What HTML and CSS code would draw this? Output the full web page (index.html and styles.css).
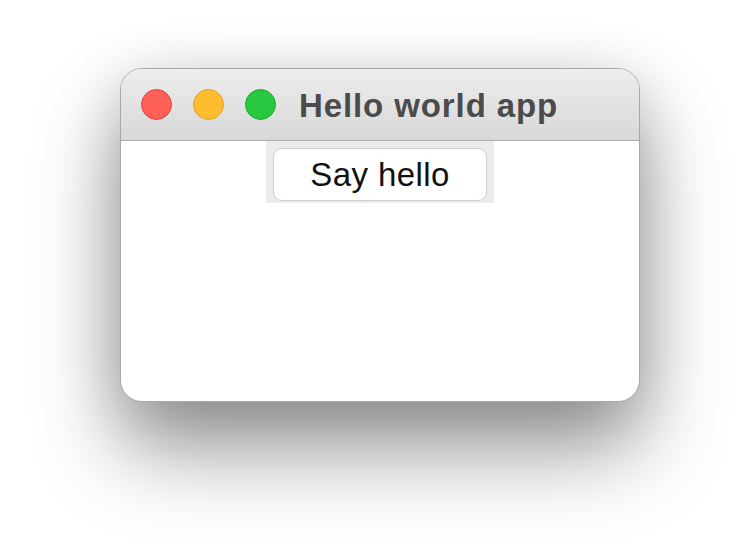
FILE: index.html
```html
<!DOCTYPE html>
<html lang="en">
<head>
  <meta charset="UTF-8">
  <meta name="viewport" content="width=device-width, initial-scale=1.0">
  <title>Hello world app</title>
  <link rel="stylesheet" href="styles.css">
</head>
<body>
  <div class="window">
    <div class="titlebar">
      <div class="lights">
        <span class="light close"></span>
        <span class="light minimize"></span>
        <span class="light zoom"></span>
      </div>
      <h1 class="title">Hello world app</h1>
    </div>

    <div class="content">
      <div class="button-frame">
        <button class="hello-btn">Say hello</button>
      </div>
    </div>
  </div>
</body>
</html>
```

FILE: styles.css
```css
* { box-sizing: border-box; margin: 0; padding: 0; }

body {
  font-family: 'Liberation Sans', Arial, sans-serif;
  background: #fff;
  padding: 68px 0 0 120px;
  min-height: 100vh;
}

.window {
  width: 520px;
  height: 334px;
  background: #fff;
  border: 1px solid #a9a9a9;
  border-radius: 22px;
  overflow: hidden;
  display: flex;
  flex-direction: column;
  box-shadow: 0 48px 85px rgba(0, 0, 0, 0.4), 0 10px 60px rgba(0, 0, 0, 0.15);
}

.titlebar {
  height: 72px;
  background: linear-gradient(#ededed, #d8d8d8);
  border-bottom: 1px solid #aeaeae;
  display: flex;
  align-items: center;
  padding-left: 20px;
  flex-shrink: 0;
}

.lights {
  display: flex;
  gap: 21px;
}

.light {
  width: 31px;
  height: 31px;
  border-radius: 50%;
  display: block;
}

.close { background: #fe5f57; border: 1px solid #e0443e; }
.minimize { background: #febc2e; border: 1px solid #dea123; }
.zoom { background: #28c840; border: 1px solid #1aab29; }

.title {
  margin-left: 23px;
  font-size: 33px;
  font-weight: bold;
  letter-spacing: 0.9px;
  color: #4b4b4b;
  margin-top: 2px;
}

.content {
  flex: 1;
  display: flex;
  justify-content: center;
  align-items: flex-start;
}

.button-frame {
  background: #ececec;
  padding: 7px 7px 2px 7px;
}

.hello-btn {
  width: 214px;
  height: 53px;
  background: #fff;
  border: 1px solid #cfcfcf;
  border-radius: 9px;
  font-family: 'Liberation Sans', Arial, sans-serif;
  font-size: 33px;
  letter-spacing: 0.4px;
  color: #111;
  cursor: pointer;
}
```
